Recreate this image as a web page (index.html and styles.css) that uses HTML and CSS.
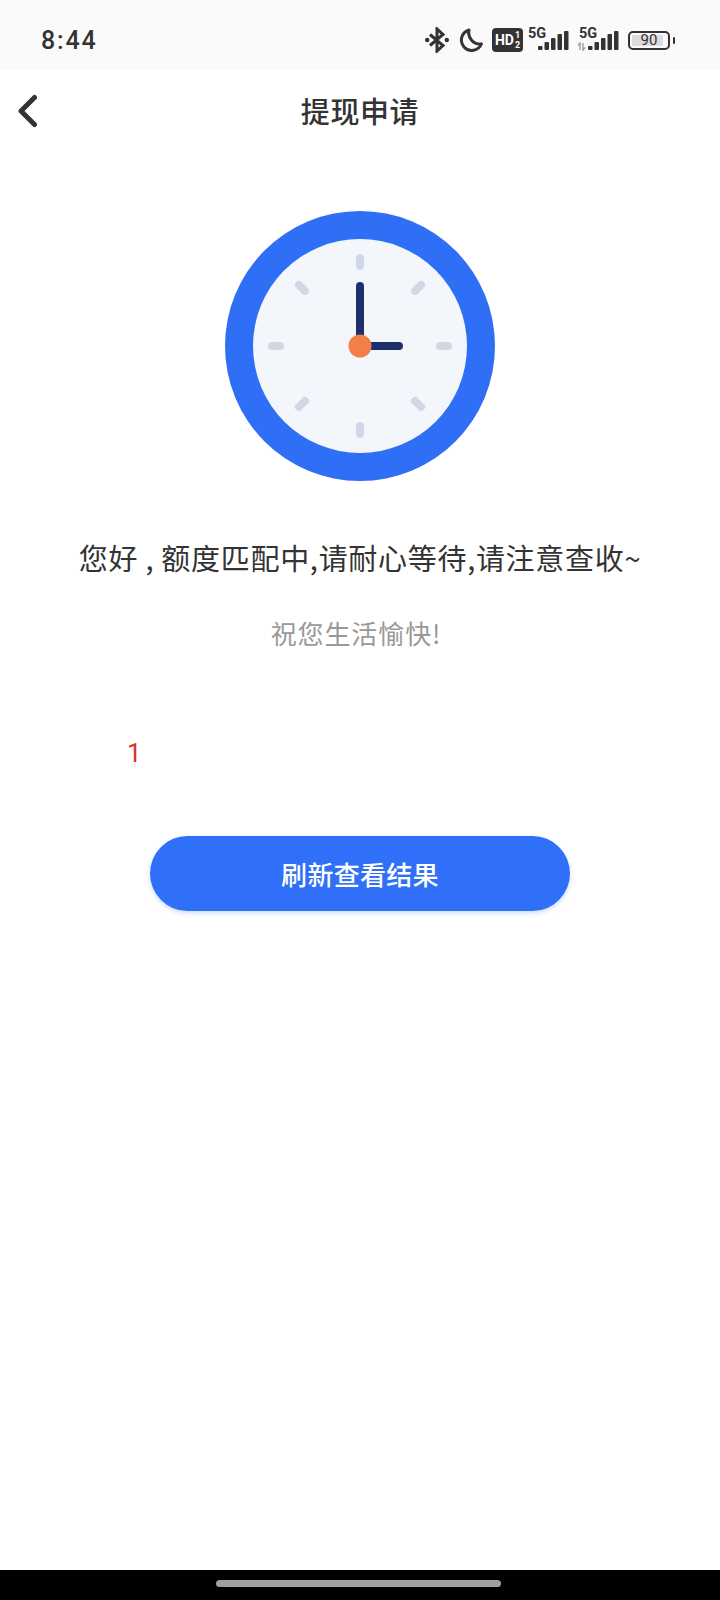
FILE: index.html
```html
<!DOCTYPE html>
<html lang="zh-CN">
<head>
    <meta charset="UTF-8">
    <meta name="viewport" content="width=device-width, initial-scale=1.0">
    <title>提现申请</title>
    <link rel="stylesheet" href="styles.css">
</head>
<body>
<div class="page">

    <!-- status bar -->
    <div class="status-bar">
        <span class="time">8:44</span>
        <div class="status-icons">
            <svg class="icon-bt" width="24" height="26" viewBox="0 0 24 26" fill="none" stroke="#333" stroke-width="3">
                <path d="M5 7.5 L18 18.5 L12 24 V2 L18 7.5 L5 18.5"/>
                <circle cx="2.200" cy="13" r="2.200" fill="#333" stroke="none"/>
                <circle cx="21.800" cy="13" r="2.200" fill="#333" stroke="none"/>
            </svg>
            <svg class="icon-moon" width="24" height="24" viewBox="0 0 24 24" fill="none" stroke="#333" stroke-width="3">
                <path d="M10 2 A10.4 10.4 0 1 0 22.4 16 A11.5 11.5 0 0 1 10 2 Z" stroke-linejoin="round"/>
            </svg>
            <div class="hd-badge">
                <span class="hd-text">HD</span>
                <span class="hd-nums"><span>1</span><span>2</span></span>
            </div>
            <svg class="icon-signal" width="41" height="30" viewBox="0 -6 41 30">
                <text x="0" y="10" class="sig-text">5G</text>
                <rect x="10" y="18" width="4.500" height="4" rx="1" fill="#333"/>
                <rect x="16.500" y="14" width="4.500" height="8" rx="1" fill="#333"/>
                <rect x="23" y="10" width="4.500" height="12" rx="1" fill="#333"/>
                <rect x="29.500" y="6" width="4.500" height="16" rx="1" fill="#333"/>
                <rect x="36" y="3" width="4.500" height="19" rx="1" fill="#333"/>
            </svg>
            <svg class="icon-signal" width="41" height="30" viewBox="0 -6 41 30">
                <text x="1" y="10" class="sig-text">5G</text>
                <path d="M2 22 V15 L0 17.500 M5 15 V22 L7 19.500" fill="none" stroke="#999" stroke-width="1.300"/>
                <rect x="10" y="18" width="4.500" height="4" rx="1" fill="#333"/>
                <rect x="16.500" y="14" width="4.500" height="8" rx="1" fill="#333"/>
                <rect x="23" y="10" width="4.500" height="12" rx="1" fill="#333"/>
                <rect x="29.500" y="6" width="4.500" height="16" rx="1" fill="#333"/>
                <rect x="36" y="3" width="4.500" height="19" rx="1" fill="#333"/>
            </svg>
            <div class="battery">
                <div class="battery-body">
                    <div class="battery-fill"></div>
                    <span class="battery-num">90</span>
                </div>
                <div class="battery-nub"></div>
            </div>
        </div>
    </div>

    <!-- nav -->
    <div class="nav">
        <svg class="back" width="24" height="36" viewBox="0 0 24 36" fill="none" stroke="#333" stroke-width="5" stroke-linecap="round" stroke-linejoin="round">
            <path d="M18.500 5.500 L5 19 L18.500 32.500"/>
        </svg>
        <h1 class="nav-title">提现申请</h1>
    </div>

    <!-- clock -->
    <div class="clock-wrap">
        <svg width="270" height="270" viewBox="0 0 270 270">
            <circle cx="135" cy="135" r="135" fill="#2f6ff5"/>
            <circle cx="135" cy="135" r="107" fill="#f3f6fb"/>
            <g stroke="#d0d8e8" stroke-width="8" stroke-linecap="round">
                <line x1="135" y1="47" x2="135" y2="55"/>
                <line x1="135" y1="215" x2="135" y2="223"/>
                <line x1="47" y1="135" x2="55" y2="135"/>
                <line x1="215" y1="135" x2="223" y2="135"/>
                <line x1="74" y1="74" x2="80" y2="80"/>
                <line x1="196" y1="74" x2="190" y2="80"/>
                <line x1="74" y1="196" x2="80" y2="190"/>
                <line x1="196" y1="196" x2="190" y2="190"/>
            </g>
            <g stroke="#1f2f6b" stroke-width="8" stroke-linecap="round">
                <line x1="135" y1="135" x2="135" y2="75"/>
                <line x1="135" y1="135" x2="174" y2="135"/>
            </g>
            <circle cx="135" cy="135" r="11.500" fill="#f27f47"/>
        </svg>
    </div>

    <p class="main-text">您好 , 额度匹配中,请耐心等待,请注意查收~</p>
    <p class="sub-text">祝您生活愉快!</p>
    <p class="red-num">1</p>

    <button class="refresh-btn">刷新查看结果</button>

    <div class="spacer"></div>

    <!-- android nav bar -->
    <div class="home-bar">
        <div class="home-pill"></div>
    </div>
</div>
</body>
</html>
```

FILE: styles.css
```css
body {
    margin: 0;
    background: #fff;
    font-family: "Noto Sans CJK SC", "Noto Sans", sans-serif;
}
.page {
    display: flex;
    flex-direction: column;
    min-height: 1600px;
}
.status-bar {
    height: 70px;
    box-sizing: border-box;
    background: #fafafa;
    display: flex;
    align-items: center;
    justify-content: space-between;
    padding: 10px 45px 0 41px;
}
.time {
    font-family: Roboto, sans-serif;
    font-size: 25px;
    font-weight: 500;
    letter-spacing: 1.8px;
    color: #333;
}
.status-icons {
    display: flex;
    align-items: center;
}
.icon-bt {
    margin-right: 10px;
}
.icon-moon {
    margin-right: 9px;
}
.hd-badge {
    width: 31px;
    height: 24px;
    background: #333;
    border-radius: 4px;
    color: #fff;
    display: flex;
    align-items: center;
    justify-content: center;
    font-family: Roboto, sans-serif;
    font-weight: 700;
    margin-right: 5px;
}
.hd-text {
    font-size: 14px;
}
.hd-nums {
    display: flex;
    flex-direction: column;
    font-size: 9px;
    line-height: 10px;
    margin-left: 1px;
}
.icon-signal {
    margin-right: 9px;
    margin-bottom: 6px;
}
.sig-text {
    font-family: Roboto, sans-serif;
    font-size: 14.5px;
    font-weight: 700;
    fill: #333;
}
.battery {
    display: flex;
    align-items: center;
    gap: 3px;
}
.battery-body {
    position: relative;
    width: 42px;
    height: 19px;
    box-sizing: border-box;
    border: 2px solid #333;
    border-radius: 5px;
    padding: 2px;
}
.battery-fill {
    width: 90%;
    height: 100%;
    background: #ddd;
    border-radius: 1px;
}
.battery-num {
    position: absolute;
    inset: 0;
    text-align: center;
    font-family: Roboto, sans-serif;
    font-size: 15px;
    line-height: 15px;
    color: #333;
}
.battery-nub {
    width: 2px;
    height: 7px;
    background: #333;
    border-radius: 1px;
}
.nav {
    height: 80px;
    display: grid;
    grid-template-columns: 70px 1fr 70px;
    align-items: center;
}
.back {
    margin-left: 16px;
}
.nav-title {
    margin: 0;
    text-align: center;
    font-size: 29px;
    font-weight: 500;
    letter-spacing: 0.6px;
    color: #333;
}
.clock-wrap {
    display: flex;
    justify-content: center;
    margin-top: 61px;
}
.main-text {
    margin: 55px 0 0;
    text-align: center;
    font-size: 29px;
    line-height: 42px;
    letter-spacing: 0.7px;
    color: #333;
}
.sub-text {
    margin: 36px 0 0;
    padding-right: 8px;
    text-align: center;
    font-size: 26px;
    line-height: 38px;
    letter-spacing: 0.9px;
    color: #999;
}
.red-num {
    margin: 82px 0 0 127px;
    font-family: Roboto, sans-serif;
    font-size: 26px;
    line-height: 38px;
    color: #d93030;
}
.refresh-btn {
    display: block;
    width: 420px;
    height: 75px;
    margin: 64px auto 0;
    border: none;
    border-radius: 38px;
    background: #3070f8;
    color: #fff;
    font-family: inherit;
    font-size: 26px;
    font-weight: 500;
    letter-spacing: 0.3px;
    box-shadow: 0 2px 5px rgba(48, 112, 248, 0.25);
}
.spacer {
    flex: 1;
}
.home-bar {
    height: 30px;
    box-sizing: border-box;
    padding: 0 4px 4px 0;
    background: #000;
    display: flex;
    align-items: center;
    justify-content: center;
}
.home-pill {
    width: 285px;
    height: 7px;
    border-radius: 4px;
    background: #a0a0a0;
}
```
